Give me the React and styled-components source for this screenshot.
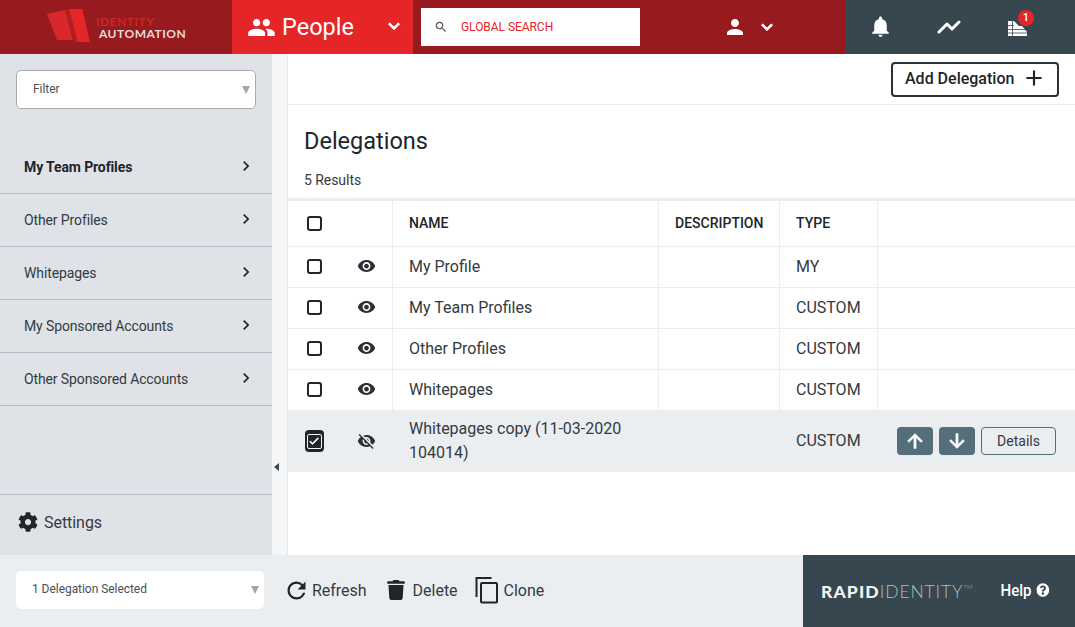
import styled, { createGlobalStyle } from 'styled-components'
import {
  MdPeople, MdKeyboardArrowDown, MdPerson, MdNotifications, MdSearch, MdChevronRight,
  MdVisibility, MdVisibilityOff, MdArrowUpward, MdArrowDownward, MdRefresh, MdAdd, MdCheck,
} from 'react-icons/md'
import { FaCog, FaTrash, FaQuestionCircle } from 'react-icons/fa'

const GlobalStyle = createGlobalStyle`
  html, body { margin: 0; padding: 0; height: 100%; }
  body { font-family: Roboto, "Liberation Sans", sans-serif; color: #212529; overflow: hidden; }
  * { box-sizing: border-box; }
`

const Page = styled.div`
  display: grid;
  grid-template-rows: 54px 501px 72px;
  width: 1075px;
  height: 627px;
`

const Header = styled.header`
  display: flex;
  background: #961a1e;
  color: #fff;
`
const LogoArea = styled.div`
  width: 232px;
  display: flex;
  align-items: center;
  padding-left: 47px;
  gap: 8px;
`
const LogoText = styled.div`
  font-family: Lato, sans-serif;
  font-weight: 700;
  font-size: 12px;
  line-height: 12px;
  letter-spacing: 0.5px;
  margin-top: 1px;
`
const LogoLine = styled.div`
  color: ${props => props.red ? '#cc2629' : '#e8dcdc'};
  margin-left: ${props => props.red ? '-3px' : '0'};
`
const AppSwitch = styled.div`
  width: 181px;
  background: #e52528;
  display: flex;
  align-items: center;
  padding-left: 15px;
  font-size: 23.5px;
  font-weight: 400;
`
const AppName = styled.span`
  margin-left: 6px;
  flex: 1;
`
const BoldCaret = styled(MdKeyboardArrowDown)`
  path:not([fill='none']) {
    stroke: currentColor;
    stroke-width: 1;
  }
`
const SwitchCaret = styled(BoldCaret)`
  margin: 0 8px 2px 0;
`
const SearchWrap = styled.div`
  width: 433px;
  padding: 8px;
  display: flex;
  align-items: stretch;
`
const SearchBox = styled.div`
  width: 219px;
  background: #fff;
  display: flex;
  align-items: center;
  padding-left: 13px;
  color: #e52528;
  font-size: 12px;
  letter-spacing: -0.05px;
`
const SearchIcon = styled(MdSearch)`
  color: #555;
  margin-right: 13px;
`
const UserMenu = styled.div`
  position: absolute;
  left: 723px;
  top: 15px;
  display: flex;
  align-items: center;
  gap: 9px;
`
const HeaderIcons = styled.div`
  flex: 1;
  background: #37474f;
  display: flex;
  align-items: center;
  padding-left: 22px;
  gap: 43px;
`
const BellIcon = styled(MdNotifications)`
  margin-bottom: 2px;
`
const ChartSvg = styled.svg`
  margin: 0 0 2px 1px;
`
const IconBadgeWrap = styled.div`
  position: relative;
  display: flex;
  margin-left: 3px;
  margin-top: 2px;
`
const Badge = styled.span`
  position: absolute;
  top: -11px;
  right: -7px;
  width: 16px;
  height: 16px;
  border-radius: 50%;
  background: #e52528;
  font-size: 11px;
  font-weight: 500;
  display: flex;
  align-items: center;
  justify-content: center;
`

const Body = styled.div`
  display: flex;
  min-height: 0;
`
const Sidebar = styled.aside`
  width: 272px;
  background: #dfe3e7;
  display: flex;
  flex-direction: column;
`
const FilterWrap = styled.div`
  padding: 16px 16px 32px;
`
const SelectBox = styled.div`
  position: relative;
  height: ${props => props.plain ? '38px' : '39px'};
  width: ${props => props.plain ? '248px' : '240px'};
  background: #fff;
  border: ${props => props.plain ? 'none' : '1px solid #a9acae'};
  border-radius: 5px;
  display: flex;
  align-items: center;
  padding: 0 0 2px 16px;
  font-size: 12px;
  letter-spacing: -0.05px;
  color: #495057;
`
const SelectArrow = styled.span`
  position: absolute;
  right: 5px;
  top: 50%;
  margin-top: -4px;
  width: 0;
  height: 0;
  border-left: 4px solid transparent;
  border-right: 4px solid transparent;
  border-top: 8px solid #a5a5a5;
`
const NavItem = styled.div`
  height: 53px;
  display: flex;
  align-items: center;
  justify-content: space-between;
  padding: 0 16px 1px 24px;
  border-bottom: 1px solid #b4bcc4;
  font-size: 14px;
  letter-spacing: -0.12px;
  font-weight: ${props => props.active ? 700 : 400};
  color: ${props => props.active ? '#212529' : '#343a40'};
`
const NavChevron = styled(MdChevronRight)`
  color: #212529;
  margin-bottom: 2px;
`
const SettingsRow = styled.div`
  margin-top: auto;
  height: 61px;
  border-top: 1px solid #b4bcc4;
  display: flex;
  align-items: center;
  padding: 0 0 6px 18px;
  gap: 6px;
  font-size: 16px;
  letter-spacing: -0.05px;
  color: #343a40;
`
const SettingsIcon = styled(FaCog)`
  color: #212529;
`
const Splitter = styled.div`
  position: relative;
  width: 16px;
  background: #f3f5f6;
  border-right: 1px solid #e6e8eb;
`
const SplitterArrow = styled.span`
  position: absolute;
  left: 2px;
  top: 409px;
  width: 0;
  height: 0;
  border-top: 4px solid transparent;
  border-bottom: 4px solid transparent;
  border-right: 5px solid #37474f;
`

const Main = styled.main`
  flex: 1;
  min-width: 0;
  background: #fff;
`
const ActionBar = styled.div`
  height: 51px;
  border-bottom: 1px solid #ebedf1;
  display: flex;
  justify-content: flex-end;
  padding: 8px 16px 0 0;
`
const AddButton = styled.button`
  width: 168px;
  height: 35px;
  border: 2px solid #2b3036;
  border-radius: 4px;
  background: #fff;
  font-family: inherit;
  font-size: 16px;
  font-weight: 500;
  color: #212529;
  display: flex;
  align-items: center;
  padding: 0 0 3px 12px;
  gap: 7px;
`
const Title = styled.h1`
  margin: 0;
  padding: 22px 16px 0;
  font-size: 23.5px;
  line-height: 29px;
  font-weight: 400;
  color: #212529;
`
const ResultCount = styled.div`
  padding: 16px 16px 0;
  height: 42px;
  font-size: 14px;
  line-height: 16px;
  letter-spacing: -0.05px;
  color: #343a40;
`
const Table = styled.table`
  width: 787px;
  table-layout: fixed;
  border-collapse: collapse;
  border-top: 3px solid #ebedf1;
`
const Th = styled.th`
  height: 47px;
  padding: 0 16px 2px 16.5px;
  text-align: left;
  font-size: 14px;
  font-weight: 500;
  color: #212529;
  border-bottom: 1px solid #ebedf1;
  border-left: ${props => props.divided ? '1px solid #ebedf1' : 'none'};
`
const Row = styled.tr`
  background: ${props => props.selected ? '#ebeef0' : 'transparent'};
`
const Td = styled.td`
  height: ${props => props.tall ? '61px' : '41px'};
  padding: 0 16px 0 16.5px;
  font-size: 16px;
  line-height: 24px;
  color: #343a40;
  border-bottom: 1px solid #ebedf1;
  border-left: ${props => props.divided ? '1px solid #ebedf1' : 'none'};
`
const CellCenter = styled.div`
  display: flex;
  align-items: center;
  justify-content: center;
`
const CheckBox = styled.span`
  display: block;
  width: 15px;
  height: 15px;
  margin: ${props => props.head ? '2px 0 0' : '0 0 2px'};
  border: 2px solid #212529;
  border-radius: 3px;
  background: #fff;
`
const EyeIcon = styled(MdVisibility)`
  color: #2b3036;
  margin-bottom: 2px;
`
const EyeOffIcon = styled(MdVisibilityOff)`
  color: #2b3036;
`
const CheckedBox = styled.span`
  display: flex;
  align-items: center;
  justify-content: center;
  width: 22px;
  height: 22px;
  border-radius: 4px;
  background: #212529;
`
const CheckedInner = styled.span`
  display: flex;
  align-items: center;
  justify-content: center;
  width: 15px;
  height: 15px;
  border: 1px solid #f4f4f4;
  border-radius: 2px;
  background: #212529;
  color: #fff;
`
const BoldCheck = styled(MdCheck)`
  path:not([fill='none']) {
    stroke: currentColor;
    stroke-width: 1.5;
  }
`
const RowActions = styled.div`
  display: flex;
  gap: 6px;
  justify-content: flex-end;
  margin-right: 3px;
`
const ArrowButton = styled.button`
  width: 36px;
  height: 28px;
  padding: 0;
  border: none;
  border-radius: 4px;
  background: #546e7a;
  color: #fff;
  display: flex;
  align-items: center;
  justify-content: center;
  path:not([fill='none']) {
    stroke: currentColor;
    stroke-width: 1;
  }
`
const DetailsButton = styled.button`
  width: 75px;
  height: 28px;
  padding: 0;
  border: 1px solid #546e7a;
  border-radius: 4px;
  background: transparent;
  font-family: inherit;
  font-size: 14px;
  color: #343a40;
`

const Footer = styled.footer`
  display: flex;
  align-items: center;
  background: #ebeef0;
`
const FooterSelect = styled.div`
  padding-left: 16px;
  width: 283px;
  margin-bottom: 2px;
`
const FooterAction = styled.div`
  display: flex;
  align-items: center;
  gap: ${props => props.gap}px;
  margin: 0 ${props => props.after}px 2px 0;
  font-size: 16px;
  letter-spacing: -0.02px;
  color: #343a40;
`
const FooterBrand = styled.div`
  margin-left: auto;
  width: 272px;
  height: 100%;
  background: #37474f;
  display: flex;
  align-items: center;
  padding-left: 18px;
  color: #fff;
`
const BrandName = styled.div`
  font-family: Lato, sans-serif;
  font-size: 17.5px;
  letter-spacing: 0.9px;
  width: 180px;
  color: #b4bbbf;
  font-weight: 300;
  white-space: nowrap;
`
const BrandStrong = styled.span`
  font-weight: 900;
  letter-spacing: 1.1px;
  color: #f2f2f2;
`
const BrandMark = styled.sup`
  font-size: 6px;
  letter-spacing: 0;
  vertical-align: 9px;
  line-height: 0;
`
const HelpLink = styled.div`
  display: flex;
  align-items: center;
  gap: 5px;
  font-size: 16px;
  font-weight: 500;
  margin: 0 0 2px -2px;
  transform: scaleX(0.94);
`

const IdentityMark = () => (
  <svg width="44" height="36" viewBox="0 0 44 36">
    <polygon points="0,5 18,1 26,31 10,31" fill="#d8282c" />
    <polygon points="18,1 35,-2 43,33 28,33" fill="#e52528" />
    <polygon points="18,1 22,0 31,33 28,33" fill="#b01f22" />
  </svg>
)

const ChartIcon = () => (
  <ChartSvg width="25" height="25" viewBox="0 0 25 25" fill="none" stroke="#fff" strokeWidth="3" strokeLinecap="round" strokeLinejoin="round">
    <polyline points="2,18 10,10 15,15 22,8" />
  </ChartSvg>
)

const QueueIcon = () => (
  <svg width="19" height="15" viewBox="0 0 19 15" fill="#fff">
    <path d="M0 0h6l5 5h3l5 6v4H0z" />
    <path d="M0 4.5h6M0 8.5h19M0 12h19M4.5 0v15" stroke="#37474f" strokeWidth="0.8" fill="none" />
  </svg>
)

const CloneIcon = () => (
  <svg width="24" height="28" viewBox="0 0 24 28" fill="none" stroke="#212529" strokeWidth="2">
    <path d="M1.5 21V2h15" />
    <rect x="6" y="7" width="16" height="19.5" rx="1" />
  </svg>
)

const delegations = [
  { name: 'My Profile', type: 'MY' },
  { name: 'My Team Profiles', type: 'CUSTOM' },
  { name: 'Other Profiles', type: 'CUSTOM' },
  { name: 'Whitepages', type: 'CUSTOM' },
]

const navItems = ['My Team Profiles', 'Other Profiles', 'Whitepages', 'My Sponsored Accounts', 'Other Sponsored Accounts']

export default function App() {
  return (
    <Page>
      <GlobalStyle />
      <Header>
        <LogoArea>
          <IdentityMark />
          <LogoText>
            <LogoLine red>IDENTITY</LogoLine>
            <LogoLine>AUTOMATION</LogoLine>
          </LogoText>
        </LogoArea>
        <AppSwitch>
          <MdPeople size={29} />
          <AppName>People</AppName>
          <SwitchCaret size={22} />
        </AppSwitch>
        <SearchWrap>
          <SearchBox>
            <SearchIcon size={14} />
            GLOBAL SEARCH
          </SearchBox>
        </SearchWrap>
        <UserMenu>
          <MdPerson size={24} />
          <BoldCaret size={22} />
        </UserMenu>
        <HeaderIcons>
          <BellIcon size={25} />
          <ChartIcon />
          <IconBadgeWrap>
            <QueueIcon />
            <Badge>1</Badge>
          </IconBadgeWrap>
        </HeaderIcons>
      </Header>

      <Body>
        <Sidebar>
          <FilterWrap>
            <SelectBox>
              Filter
              <SelectArrow />
            </SelectBox>
          </FilterWrap>
          {navItems.map((item, i) => (
            <NavItem key={item} active={i === 0}>
              {item}
              <NavChevron size={20} />
            </NavItem>
          ))}
          <SettingsRow>
            <SettingsIcon size={20} />
            Settings
          </SettingsRow>
        </Sidebar>
        <Splitter>
          <SplitterArrow />
        </Splitter>
        <Main>
          <ActionBar>
            <AddButton>
              Add Delegation
              <MdAdd size={26} />
            </AddButton>
          </ActionBar>
          <Title>Delegations</Title>
          <ResultCount>5 Results</ResultCount>
          <Table>
            <colgroup>
              <col width="52" />
              <col width="52" />
              <col width="266" />
              <col width="121" />
              <col width="98" />
              <col width="198" />
            </colgroup>
            <thead>
              <tr>
                <Th><CellCenter><CheckBox head /></CellCenter></Th>
                <Th />
                <Th divided>NAME</Th>
                <Th divided>DESCRIPTION</Th>
                <Th divided>TYPE</Th>
                <Th divided />
              </tr>
            </thead>
            <tbody>
              {delegations.map(d => (
                <Row key={d.name}>
                  <Td><CellCenter><CheckBox /></CellCenter></Td>
                  <Td><CellCenter><EyeIcon size={22} /></CellCenter></Td>
                  <Td divided>{d.name}</Td>
                  <Td divided />
                  <Td divided>{d.type}</Td>
                  <Td divided />
                </Row>
              ))}
              <Row selected>
                <Td tall>
                  <CellCenter>
                    <CheckedBox>
                      <CheckedInner><BoldCheck size={12} /></CheckedInner>
                    </CheckedBox>
                  </CellCenter>
                </Td>
                <Td tall><CellCenter><EyeOffIcon size={22} /></CellCenter></Td>
                <Td tall divided>Whitepages copy (11-03-2020 104014)</Td>
                <Td tall divided />
                <Td tall divided>CUSTOM</Td>
                <Td tall divided>
                  <RowActions>
                    <ArrowButton><MdArrowUpward size={22} /></ArrowButton>
                    <ArrowButton><MdArrowDownward size={22} /></ArrowButton>
                    <DetailsButton>Details</DetailsButton>
                  </RowActions>
                </Td>
              </Row>
            </tbody>
          </Table>
        </Main>
      </Body>

      <Footer>
        <FooterSelect>
          <SelectBox plain>
            1 Delegation Selected
            <SelectArrow />
          </SelectBox>
        </FooterSelect>
        <FooterAction gap={2} after={19}>
          <MdRefresh size={27} color="#212529" />
          Refresh
        </FooterAction>
        <FooterAction gap={7} after={17}>
          <FaTrash size={20} color="#212529" />
          Delete
        </FooterAction>
        <FooterAction gap={5} after={0}>
          <CloneIcon />
          Clone
        </FooterAction>
        <FooterBrand>
          <BrandName><BrandStrong>RAPID</BrandStrong>IDENTITY<BrandMark>TM</BrandMark></BrandName>
          <HelpLink>
            Help
            <FaQuestionCircle size={14} />
          </HelpLink>
        </FooterBrand>
      </Footer>
    </Page>
  )
}
